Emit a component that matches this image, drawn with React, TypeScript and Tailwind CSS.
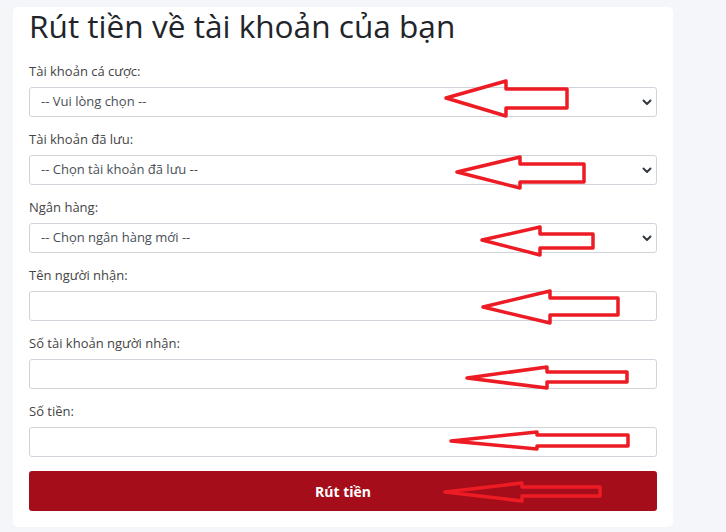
import React from "react";

const font = { fontFamily: '"Open Sans", "Noto Sans", sans-serif' };

function Chevron() {
  return (
    <svg
      className="pointer-events-none absolute right-[5px] top-1/2 -translate-y-1/2"
      width="10"
      height="8"
      viewBox="0 0 10 8"
    >
      <path d="M1.5 2.5 L5 6 L8.5 2.5" fill="none" stroke="#343a40" strokeWidth="2" strokeLinecap="round" strokeLinejoin="round" />
    </svg>
  );
}

function SelectField({ label, placeholder }: { label: string; placeholder: string }) {
  return (
    <div className="mb-[12px]">
      <div className="h-[20px] mb-[6px] text-[13px] leading-[20px] text-[#444]">{label}</div>
      <div className="relative">
        <select
          className="w-full h-[30px] appearance-none rounded-[3px] border border-[#ced4da] bg-white pl-[11px] text-[13px] text-[#495057] outline-none"
          style={font}
          defaultValue=""
        >
          <option value="">{placeholder}</option>
        </select>
        <Chevron />
      </div>
    </div>
  );
}

function InputField({ label, last }: { label: string; last?: boolean }) {
  return (
    <div className={last ? "mb-[14px]" : "mb-[12px]"}>
      <div className="h-[20px] mb-[6px] text-[13px] leading-[20px] text-[#444]">{label}</div>
      <input
        className="block w-full h-[30px] rounded-[3px] border border-[#ced4da] bg-white px-[11px] text-[13px] text-[#495057] outline-none"
        style={font}
      />
    </div>
  );
}

const arrows: { tip: [number, number]; hx: number; ht: number; hb: number; st: number; sb: number; r: number }[] = [
  { tip: [446, 98], hx: 506, ht: 81, hb: 116, st: 89, sb: 108, r: 567 },
  { tip: [457, 172], hx: 520, ht: 157, hb: 188, st: 164, sb: 182, r: 584 },
  { tip: [482, 240], hx: 540, ht: 227, hb: 255, st: 234, sb: 248, r: 593 },
  { tip: [483, 307], hx: 550, ht: 291, hb: 323, st: 298, sb: 315, r: 618 },
  { tip: [467, 378], hx: 547, ht: 367, hb: 388, st: 372, sb: 382, r: 627 },
  { tip: [451, 441], hx: 537, ht: 432, hb: 449, st: 435, sb: 446, r: 628 },
  { tip: [445, 492], hx: 522, ht: 483, hb: 501, st: 487, sb: 496, r: 600 },
];

export default function App() {
  return (
    <div className="relative w-[726px] h-[532px] overflow-hidden bg-[#f5f6fa] pl-[13px] pt-[7px]" style={font}>
      <div className="w-[660px] rounded-[5px] bg-white px-4 pb-4">
        <h1 className="text-[31.6px] leading-[38px] text-[#212529] font-normal mb-[16px]">
          Rút tiền về tài khoản của bạn
        </h1>
        <SelectField label="Tài khoản cá cược:" placeholder="-- Vui lòng chọn --" />
        <SelectField label="Tài khoản đã lưu:" placeholder="-- Chọn tài khoản đã lưu --" />
        <SelectField label="Ngân hàng:" placeholder="-- Chọn ngân hàng mới --" />
        <InputField label="Tên người nhận:" />
        <InputField label="Số tài khoản người nhận:" />
        <InputField label="Số tiền:" last />
        <button className="flex w-full h-[40px] items-center justify-center rounded-[3px] bg-[#a50d1a] text-[14px] font-bold text-white">
          Rút tiền
        </button>
      </div>
      <svg className="pointer-events-none absolute left-0 top-0" width="726" height="532" viewBox="0 0 726 532">
        {arrows.map((a, i) => (
          <polygon
            key={i}
            points={`${a.tip[0]},${a.tip[1]} ${a.hx},${a.ht} ${a.hx},${a.st} ${a.r},${a.st} ${a.r},${a.sb} ${a.hx},${a.sb} ${a.hx},${a.hb}`}
            fill="none"
            stroke="#ed1c24"
            strokeWidth="3.5"
            strokeLinejoin="round"
          />
        ))}
      </svg>
    </div>
  );
}
